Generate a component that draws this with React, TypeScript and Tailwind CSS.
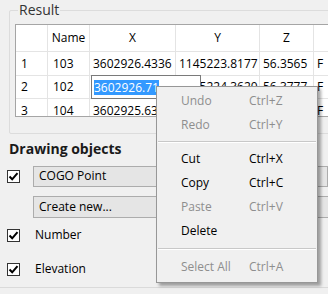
import React from "react";

const Check = () => (
  <div className="w-[13px] h-[13px] border border-[#333333] bg-white flex items-center justify-center shrink-0">
    <svg width="11" height="11" viewBox="0 0 11 11">
      <path d="M1.5 5.5 L4.2 8.3 L9.5 2.2" stroke="#000" strokeWidth="2" fill="none" />
    </svg>
  </div>
);

const cols = [32, 42, 86, 84, 54, 80];

function Row({ cells, h, header, editor }: { cells: string[]; h: number; header?: boolean; editor?: boolean }) {
  return (
    <div className="flex border-b border-[#e4e4e4]" style={{ height: h }}>
      {cells.map((c, i) => (
        <div
          key={i}
          className={
            "relative shrink-0 border-r border-[#e4e4e4] flex items-center whitespace-nowrap " +
            (header && i > 0 ? "justify-center" : i <= 1 ? "pl-[5px]" : "pl-[3px]")
          }
          style={{ width: cols[i] }}
        >
          {editor && i === 2 ? (
            <div className="absolute left-[1px] top-[-1px] w-[110px] h-[24px] bg-white border border-[#7a7a7a] z-10 flex items-center pl-[2px]">
              <span className="bg-[#3399ff] text-white leading-[15px]">3602926.71</span>
            </div>
          ) : (
            c
          )}
        </div>
      ))}
    </div>
  );
}

const MenuItem = ({ label, sc, dis, bold }: { label: string; sc?: string; dis?: boolean; bold?: boolean }) => (
  <div className={"flex items-center h-[24px] pl-[24px] " + (dis ? "text-[#8e8e8e]" : "text-black")}>
    <span className={"w-[68px] " + (bold ? "font-semibold" : "")}>{label}</span>
    <span>{sc}</span>
  </div>
);

const Sep = ({ h }: { h: number }) => (
  <div className="flex flex-col justify-center px-[1px]" style={{ height: h }}>
    <div className="h-[1px] bg-[#c8c8c8]" />
    <div className="h-[1px] bg-white" />
  </div>
);

export default function App() {
  return (
    <div className="relative w-[328px] h-[294px] overflow-hidden bg-[#f0f0f0] text-[12px] text-black" style={{ fontFamily: "'Open Sans', 'Noto Sans', sans-serif" }}>
      {/* Result group */}
      <div className="relative ml-[9px] mt-[10px] w-[340px] h-[124px] border border-[#dcdcdc] rounded-[2px] pt-[13px] pl-[5px]">
        <div className="absolute left-[8px] top-[-10px] px-[1px] bg-[#f0f0f0] text-[14px] leading-[18px] text-[#333333]">Result</div>
        <div className="h-[93px] w-[400px] bg-white border border-[#a5a5a5] overflow-hidden">
          <Row header h={27} cells={["", "Name", "X", "Y", "Z", ""]} />
          <Row h={24} cells={["1", "103", "3602926.4336", "1145223.8177", "56.3565", "F"]} />
          <Row h={23} editor cells={["2", "102", "", "1145224.3620", "56.3777", "F"]} />
          <Row h={24} cells={["3", "104", "3602925.6310", "1145225.1234", "56.4012", "F"]} />
        </div>
      </div>

      {/* Drawing objects */}
      <div className="pl-[7px] pt-[6px]">
        <div className="text-[14px] font-bold leading-[18px] pl-[2px] text-[#1a1a1a]">Drawing objects</div>
        <div className="flex items-center mt-[8px] gap-[13px] h-[20px]">
          <Check />
          <div className="w-[300px] h-[21px] bg-[#e5e5e5] border border-[#acacac] flex items-center pl-[5px]">COGO Point</div>
        </div>
        <div className="ml-[26px] mt-[10px] w-[300px] h-[22px] bg-[#e5e5e5] border border-[#acacac] flex items-center pl-[5px]">Create new...</div>
        <div className="flex items-center mt-[9px] gap-[15px] h-[16px]">
          <Check />
          <span>Number</span>
        </div>
        <div className="flex items-center mt-[18px] gap-[15px] h-[16px]">
          <Check />
          <span>Elevation</span>
        </div>
        <div className="mt-[10px] -ml-[7px] h-[1px] w-[328px] bg-[#dadada]" />
      </div>

      {/* Context menu */}
      <div className="absolute left-[156px] top-[86px] w-[162px] h-[197px] bg-[#f0f0f0] border border-[#979797] shadow-[3px_3px_3px_rgba(0,0,0,0.35)] py-[2px] z-20">
        <MenuItem label="Undo" sc="Ctrl+Z" dis />
        <MenuItem label="Redo" sc="Ctrl+Y" dis />
        <Sep h={10} />
        <MenuItem label="Cut" sc="Ctrl+X" />
        <MenuItem label="Copy" sc="Ctrl+C" />
        <MenuItem label="Paste" sc="Ctrl+V" dis />
        <MenuItem label="Delete" />
        <Sep h={12} />
        <MenuItem label="Select All" sc="Ctrl+A" dis />
      </div>
    </div>
  );
}
